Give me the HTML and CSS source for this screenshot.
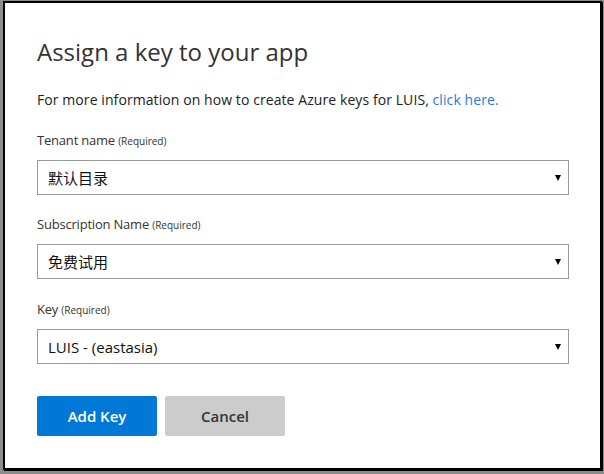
FILE: index.html
```html
<!DOCTYPE html>
<html lang="en">
<head>
<meta charset="utf-8">
<title>Assign a key to your app</title>
<link rel="stylesheet" href="styles.css">
</head>
<body>
<div class="backdrop">
  <div class="dialog">
    <h1 class="title">Assign a key to your app</h1>
    <p class="intro">For more information on how to create Azure keys for LUIS, <a class="link" href="#">click here.</a></p>

    <div class="field">
      <div class="label">Tenant name <span class="req">(Required)</span></div>
      <div class="select"><span class="value cjk">默认目录</span><span class="caret"></span></div>
    </div>

    <div class="field">
      <div class="label">Subscription Name <span class="req">(Required)</span></div>
      <div class="select"><span class="value cjk">免费试用</span><span class="caret"></span></div>
    </div>

    <div class="field field-key">
      <div class="label">Key <span class="req">(Required)</span></div>
      <div class="select"><span class="value">LUIS - (eastasia)</span><span class="caret"></span></div>
    </div>

    <div class="actions">
      <button class="btn btn-primary">Add Key</button>
      <button class="btn btn-secondary">Cancel</button>
    </div>
  </div>
</div>
</body>
</html>
```

FILE: styles.css
```css
html, body {
  margin: 0;
  padding: 0;
}
body {
  background: #8c8c8c;
  width: 604px;
  height: 474px;
  overflow: hidden;
  font-family: "Open Sans", "Noto Sans", "Noto Sans CJK SC", sans-serif;
  color: #333;
}
.backdrop {
  padding: 1px 0 0 3px;
}
.dialog {
  box-sizing: border-box;
  width: 599px;
  height: 469px;
  background: #fff;
  border: 2px solid #000;
  box-shadow: 1px 1px 0 #000;
  padding: 33px 0 0 32px;
  display: flex;
  flex-direction: column;
}
.title {
  margin: 0;
  font-size: 24px;
  line-height: 32px;
  font-weight: 400;
  color: #333;
}
.intro {
  margin: 22px 0 0;
  font-size: 14px;
  line-height: 20px;
  color: #222;
  letter-spacing: 0.08px;
}
.link {
  color: #2a7ad4;
  text-decoration: none;
}
.field {
  margin-top: 21px;
  display: flex;
  flex-direction: column;
}
.field + .field {
  margin-top: 20px;
}
.field + .field-key {
  margin-top: 21px;
}
.label {
  height: 18px;
  font-size: 13px;
  line-height: 18px;
  color: #333;
  letter-spacing: -0.2px;
}
.req {
  font-size: 10px;
  line-height: 0;
  letter-spacing: 0;
}
.select {
  margin-top: 11px;
  box-sizing: border-box;
  width: 532px;
  height: 35px;
  border: 1px solid #999;
  display: flex;
  align-items: center;
  justify-content: space-between;
  padding: 0 7px 0 10px;
}
.value {
  font-size: 15px;
  color: #111;
}
.cjk {
  font-family: "Noto Sans CJK SC", sans-serif;
  font-size: 15px;
}
.caret {
  width: 0;
  height: 0;
  border-left: 3.5px solid transparent;
  border-right: 3.5px solid transparent;
  border-top: 6px solid #000;
}
.actions {
  margin-top: 32px;
  display: flex;
  gap: 8px;
}
.btn {
  width: 120px;
  height: 40px;
  border: none;
  border-radius: 2px;
  font-family: "Open Sans", "Noto Sans", sans-serif;
  font-size: 15px;
  font-weight: 600;
  cursor: pointer;
}
.btn-primary {
  background: #0078d7;
  color: #fff;
}
.btn-secondary {
  background: #cccccc;
  color: #333;
}
```
